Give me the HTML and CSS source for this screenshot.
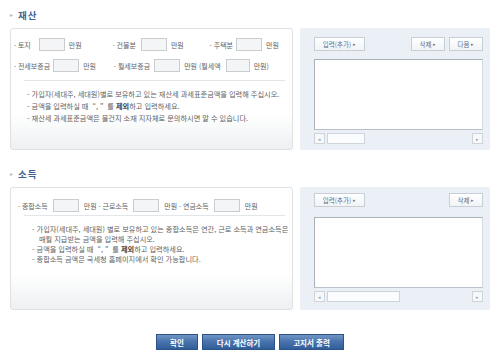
FILE: index.html
```html
<!DOCTYPE html>
<html lang="ko">
<head>
<meta charset="utf-8">
<link rel="stylesheet" href="styles.css">
</head>
<body>
<div class="page">
  <section class="sec sec-asset">
    <h2 class="sec-title"><span class="sec-arrow">▸</span>재산</h2>
    <div class="sec-row">
      <div class="form-box box-asset">
        <div class="f-row">
          <div class="fld g-land"><span class="lbl">· 토지</span><span class="inp"></span><span class="unit">만원</span></div>
          <div class="fld g-bld"><span class="lbl">· 건물분</span><span class="inp"></span><span class="unit">만원</span></div>
          <div class="fld g-house"><span class="lbl">· 주택분</span><span class="inp"></span><span class="unit">만원</span></div>
        </div>
        <div class="f-row">
          <div class="fld g-jeonse"><span class="lbl">· 전세보증금</span><span class="inp"></span><span class="unit">만원</span></div>
          <div class="fld g-wolse"><span class="lbl">· 월세보증금</span><span class="inp"></span><span class="unit">만원 (월세액</span><span class="inp inp-rent"></span><span class="unit">만원)</span></div>
        </div>
        <div class="sep"></div>
        <ul class="notes">
          <li>- 가입자(세대주, 세대원)별로 보유하고 있는 재산세 과세표준금액을 입력해 주십시오.</li>
          <li>- 금액을 입력하실 때 &nbsp;“, ” &nbsp;를 <b>제외</b>하고 입력하세요.</li>
          <li>- 재산세 과세표준금액은 물건지 소재 지자체로 문의하시면 알 수 있습니다.</li>
        </ul>
      </div>
      <div class="list-panel panel-asset">
        <div class="pbtns">
          <span class="pbtn pbtn-add">입력(추가) <i>▸</i></span>
          <span class="pbtn-right">
            <span class="pbtn">삭제 <i>▸</i></span>
            <span class="pbtn">다음 <i>▸</i></span>
          </span>
        </div>
        <div class="listbox"></div>
        <div class="hscroll">
          <span class="sb-arrow">◂</span>
          <span class="sb-thumb"></span>
          <span class="sb-track"></span>
          <span class="sb-arrow">▸</span>
        </div>
      </div>
    </div>
  </section>

  <section class="sec sec-income">
    <h2 class="sec-title"><span class="sec-arrow">▸</span>소득</h2>
    <div class="sec-row">
      <div class="form-box box-income">
        <div class="f-row">
          <div class="fld"><span class="lbl">· 종합소득</span><span class="inp"></span><span class="unit">만원 · 근로소득</span><span class="inp"></span><span class="unit">만원 · 연금소득</span><span class="inp"></span><span class="unit">만원</span></div>
        </div>
        <div class="sep"></div>
        <ul class="notes notes-tight">
          <li>- 가입자(세대주, 세대원) 별로 보유하고 있는 종합소득은 연간, 근로 소득과 연금소득은<br><span class="indent">매월 지급받는 금액을 입력해 주십시오.</span></li>
          <li>- 금액을 입력하실 때 &nbsp;“, ” &nbsp;를 <b>제외</b>하고 입력하세요.</li>
          <li>- 종합소득 금액은 국세청 홈페이지에서 확인 가능합니다.</li>
        </ul>
      </div>
      <div class="list-panel panel-income">
        <div class="pbtns">
          <span class="pbtn pbtn-add">입력(추가) <i>▸</i></span>
          <span class="pbtn-right">
            <span class="pbtn">삭제 <i>▸</i></span>
          </span>
        </div>
        <div class="listbox"></div>
        <div class="hscroll">
          <span class="sb-arrow">◂</span>
          <span class="sb-thumb sb-thumb-wide"></span>
          <span class="sb-track"></span>
          <span class="sb-arrow">▸</span>
        </div>
      </div>
    </div>
  </section>

  <div class="actions">
    <span class="abtn abtn-ok">확인</span>
    <span class="abtn abtn-re">다시 계산하기</span>
    <span class="abtn abtn-print">고지서 출력</span>
  </div>
</div>
</body>
</html>
```

FILE: styles.css
```css
html, body {
  margin: 0;
  padding: 0;
  background: #ffffff;
}
body {
  font-family: "Noto Sans CJK KR", "Noto Sans", sans-serif;
  color: #666;
  width: 500px;
  height: 360px;
  overflow: hidden;
}
.page {
  padding: 8px 10px 0 10px;
}
.sec-title {
  margin: 0 0 6px 0;
  height: 14px;
  line-height: 14px;
  font-size: 9.5px;
  font-weight: bold;
  letter-spacing: 1px;
  color: #3f6293;
  display: flex;
  align-items: center;
}
.sec-arrow {
  font-size: 6px;
  color: #b8b8b8;
  margin-right: 5px;
  letter-spacing: 0;
  font-weight: normal;
}
.sec-income {
  margin-top: 17px;
}
.sec-row {
  display: flex;
  gap: 7px;
}
.form-box {
  box-sizing: border-box;
  width: 283px;
  border: 1px solid #dde1e4;
  border-radius: 3px;
  background: linear-gradient(to bottom, #ffffff 0%, #ffffff 70%, #eef0f1 100%);
}
.box-asset {
  height: 122px;
  padding: 9px 0 0 3px;
}
.box-income {
  height: 123px;
  padding: 11px 0 0 7px;
}
.f-row {
  display: flex;
  height: 13px;
  align-items: center;
  margin-bottom: 8px;
}
.box-income .f-row {
  margin-bottom: 3px;
}
.fld {
  display: flex;
  align-items: center;
  font-size: 7px;
  color: #5f5f5f;
  white-space: nowrap;
}
.lbl {
  margin-right: 5px;
}
.inp {
  box-sizing: border-box;
  width: 26px;
  height: 13px;
  border: 1px solid #c9cdd0;
  background: #f4f5f6;
}
.unit {
  margin-left: 4px;
  margin-right: 4px;
}
.inp-rent {
  width: 24px;
  margin-left: 1px;
}
.g-land .lbl { margin-right: 8px; }
.g-bld { margin-left: 27px; }
.g-bld .lbl { margin-right: 5px; }
.g-house { margin-left: 22px; }
.g-house .lbl { margin-right: 3px; }
.g-jeonse .lbl { margin-right: 3px; }
.g-wolse { margin-left: 14px; }
.g-wolse .lbl { margin-right: 4px; }
.box-income .lbl { margin-right: 5px; }
.box-income .unit { margin-left: 5px; margin-right: 5px; }
.sep {
  height: 1px;
  background: #e3e6e8;
  margin: 0 7px 0 10px;
}
.box-income .sep {
  margin: 0 7px 0 6px;
}
.notes {
  list-style: none;
  margin: 7px 0 0 13px;
  padding: 0;
  font-size: 7.2px;
  line-height: 12px;
  color: #5f5f5f;
  white-space: nowrap;
}
.notes b {
  color: #444;
}
.notes-tight {
  margin: 8px 0 0 14px;
  line-height: 10px;
}
.indent {
  padding-left: 7px;
}
.list-panel {
  box-sizing: border-box;
  width: 190px;
  background: #ebf0f6;
  border-radius: 2px;
  padding: 9px 7px 0 14px;
  display: flex;
  flex-direction: column;
}
.panel-income {
  padding-top: 6px;
}
.pbtns {
  display: flex;
  justify-content: space-between;
  height: 14px;
}
.pbtn-right {
  display: flex;
  gap: 4px;
}
.pbtn {
  box-sizing: border-box;
  height: 14px;
  padding: 0 6px;
  border: 1px solid #c8ced6;
  background: linear-gradient(to bottom, #ffffff, #f1f3f5);
  font-size: 6.5px;
  line-height: 12px;
  color: #5a7090;
  white-space: nowrap;
  display: flex;
  align-items: center;
  min-width: 34px;
  justify-content: center;
}
.pbtn i {
  font-style: normal;
  font-size: 5px;
  margin-left: 2px;
  color: #6a7a90;
}
.pbtn-add {
  width: 51px;
}
.listbox {
  box-sizing: border-box;
  height: 71px;
  margin-top: 8px;
  background: #ffffff;
  border: 1px solid #a9b1ba;
  border-right-color: #d5dae0;
  border-bottom-color: #b9c0c8;
}
.panel-income .listbox {
  margin-top: 10px;
}
.hscroll {
  display: flex;
  align-items: center;
  gap: 2px;
  height: 11px;
  margin-top: 3px;
}
.sb-arrow {
  box-sizing: border-box;
  width: 11px;
  height: 11px;
  border: 1px solid #cfd4da;
  background: #f7f8fa;
  font-size: 5px;
  line-height: 9px;
  text-align: center;
  color: #9aa3ad;
}
.sb-thumb {
  box-sizing: border-box;
  width: 38px;
  height: 11px;
  border: 1px solid #cfd4da;
  background: #fbfcfd;
}
.sb-thumb-wide {
  width: 73px;
}
.sb-track {
  flex: 1;
}
.actions {
  display: flex;
  justify-content: center;
  gap: 4px;
  margin-top: 24px;
}
.abtn {
  box-sizing: border-box;
  height: 16px;
  font-size: 7.5px;
  font-weight: bold;
  color: #ffffff;
  display: flex;
  align-items: center;
  justify-content: center;
  background: linear-gradient(to bottom, #7096c6 0%, #4a74ad 45%, #315e99 100%);
  border: 1px solid #2d5288;
  white-space: nowrap;
}
.abtn-ok { width: 42px; }
.abtn-re { width: 73px; }
.abtn-print { width: 65px; }
```
